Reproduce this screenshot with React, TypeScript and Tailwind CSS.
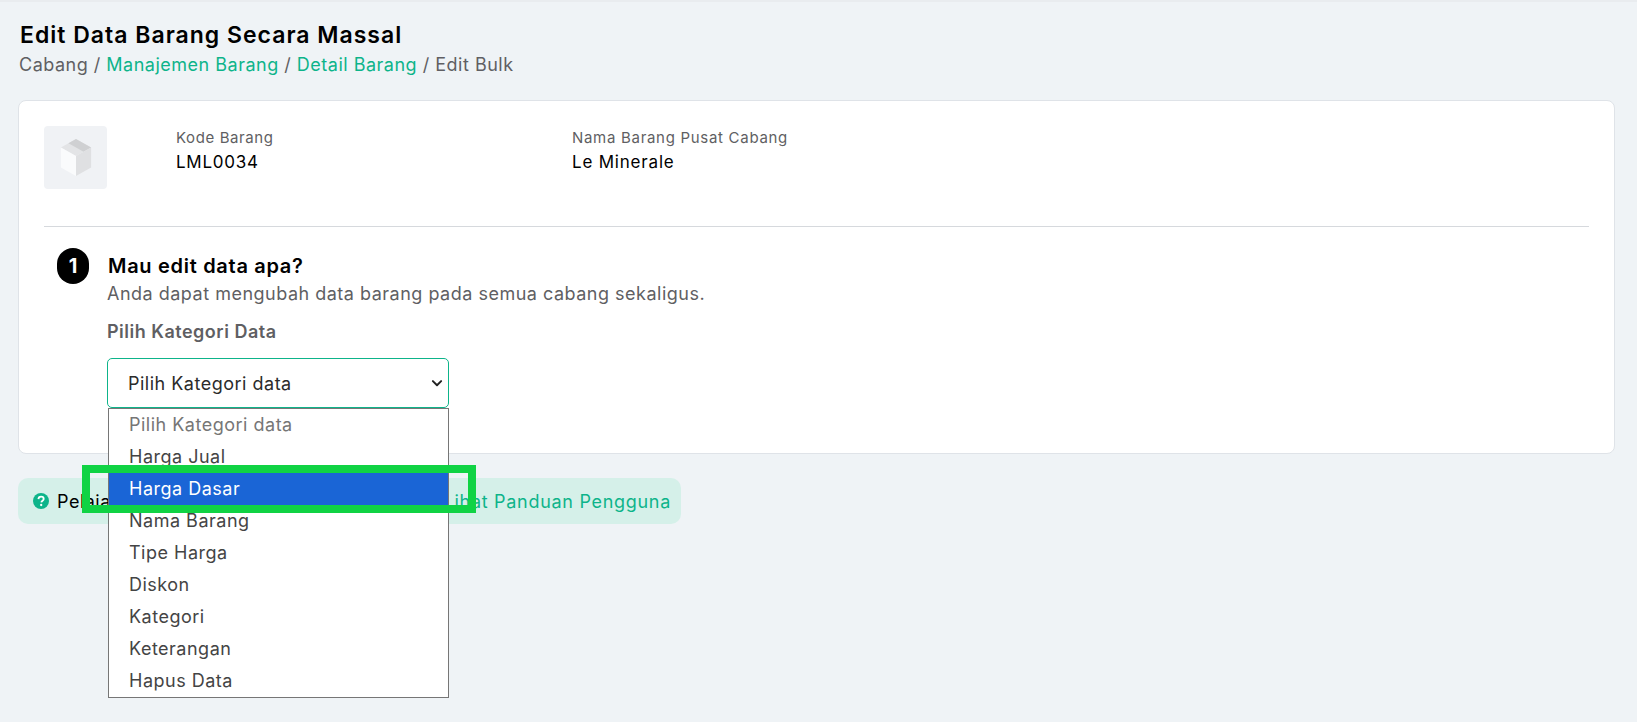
const font = { fontFamily: "Inter, 'Noto Sans', sans-serif" };

const options = ["Pilih Kategori data", "Harga Jual", "Harga Dasar", "Nama Barang", "Tipe Harga", "Diskon", "Kategori", "Keterangan", "Hapus Data"];

function BoxIcon() {
  return (
    <svg width="34" height="40" viewBox="0 0 36 40">
      <path d="M18 0 L34 9 L18 18 L2 9 Z" fill="#e3e4e6" />
      <path d="M18 0 L34 9 L26 13.5 L10 4.5 Z" fill="#cfd0d2" />
      <path d="M2 9 L18 18 V39 L2 30 Z" fill="#fafbfc" />
      <path d="M34 9 L18 18 V39 L34 30 Z" fill="#dfe0e2" />
    </svg>
  );
}

export default function App() {
  return (
    <div style={font} className="min-h-[722px] bg-[#eff3f6] px-[18px] pt-[22px] relative overflow-hidden">
      <div className="absolute left-0 right-0 top-0 h-[2px] bg-[#e9ecef]" />
      <h1 className="pl-[2px] text-[23px] leading-[26px] font-semibold text-black tracking-[1px]">Edit Data Barang Secara Massal</h1>
      <div className="pl-[1px] mt-[5px] text-[18px] leading-[24px] text-[#5f5f63] tracking-[0.5px]">
        Cabang / <span className="text-[#0db48a]">Manajemen Barang</span> / <span className="text-[#0db48a]">Detail Barang</span> / Edit Bulk
      </div>

      <div className="mt-[23px] w-[1597px] h-[354px] rounded-[8px] border border-[#dfe3e8] bg-white pl-[25px] pr-[25px] pt-[25px]">
        <div className="flex h-[100px] items-start">
          <div className="flex h-[63px] w-[63px] items-center justify-center rounded-[4px] bg-[#f0f2f5]">
            <BoxIcon />
          </div>
          <div className="ml-[69px] w-[396px] pt-[2px]">
            <div className="text-[15px] leading-[20px] text-[#5f5f63] tracking-[0.6px]">Kode Barang</div>
            <div className="mt-[2px] text-[17px] leading-[24px] font-normal text-black tracking-[0.75px]">LML0034</div>
          </div>
          <div className="pt-[2px]">
            <div className="text-[15px] leading-[20px] text-[#5f5f63] tracking-[0.7px]">Nama Barang Pusat Cabang</div>
            <div className="mt-[2px] text-[17px] leading-[24px] font-normal text-black tracking-[0.8px]">Le Minerale</div>
          </div>
        </div>
        <div className="h-px bg-[#d6d9dd]" />

        <div className="flex pl-[13px] pt-[21px]">
          <div className="flex h-[36px] w-[32px] items-center justify-center rounded-full bg-black text-[20px] font-bold text-white">1</div>
          <div className="ml-[19px]">
            <div className="mt-[5px] text-[20px] leading-[26px] font-semibold text-black tracking-[0.7px]">Mau edit data apa?</div>
            <div className="-ml-px mt-[2px] text-[18px] leading-[26px] text-[#5f5f63] tracking-[0.5px]">Anda dapat mengubah data barang pada semua cabang sekaligus.</div>
            <div className="-ml-px mt-[13px] text-[18px] leading-[24px] font-semibold text-[#5f5f63] tracking-[0.5px]">Pilih Kategori Data</div>
            <div className="relative -ml-px mt-[14px] flex h-[50px] w-[342px] items-center justify-between rounded-[5px] border border-[#0db48a] pl-[20px] pr-[5px] text-[18px] text-[#2b2b2b] tracking-[0.5px]">
              <span>Pilih Kategori data</span>
              <svg width="12" height="12" viewBox="0 0 16 16" fill="none" stroke="#222" strokeWidth="2.6" strokeLinecap="round" strokeLinejoin="round">
                <path d="M2.5 5.5 L8 11 L13.5 5.5" />
              </svg>
            </div>
          </div>
        </div>
      </div>

      <div className="mt-[24px] flex h-[46px] w-[663px] items-center justify-between rounded-[10px] bg-[#d5f0e9] pl-[15px] pr-[10px] text-[18px] tracking-[0.5px]">
        <div className="flex items-center gap-[8px] text-black">
          <svg width="16" height="16" viewBox="0 0 16 16">
            <circle cx="8" cy="8" r="8" fill="#0db48a" />
            <path d="M5.4 6.1 C5.5 4.5 6.7 3.6 8.1 3.6 C9.6 3.6 10.7 4.6 10.7 5.9 C10.7 7.6 8.4 7.8 8.3 9.4" fill="none" stroke="#fff" strokeWidth="1.8" />
            <circle cx="8.2" cy="12" r="1.15" fill="#fff" />
          </svg>
          <span>Pelajari lebih lanjut</span>
        </div>
        <span className="text-[#0db48a] tracking-[0.7px]">Lihat Panduan Pengguna</span>
      </div>

      <div className="absolute left-[108px] top-[408px] w-[341px] border border-[#767676] bg-white text-[18px] text-[#444] tracking-[0.5px]">
        {options.map((o, i) => (
          <div
            key={o}
            className={
              i === 2
                ? "flex h-[32px] items-center bg-[#1a65d6] pb-px pl-[20px] text-white"
                : i === 0
                  ? "flex h-[32px] items-center pb-px pl-[20px] text-[#767676]"
                  : "flex h-[32px] items-center pb-px pl-[20px]"
            }
          >
            {o}
          </div>
        ))}
      </div>

      <div className="absolute left-[82px] top-[465px] h-[48px] w-[394px] border-[8px] border-[#10d344]" />
    </div>
  );
}
